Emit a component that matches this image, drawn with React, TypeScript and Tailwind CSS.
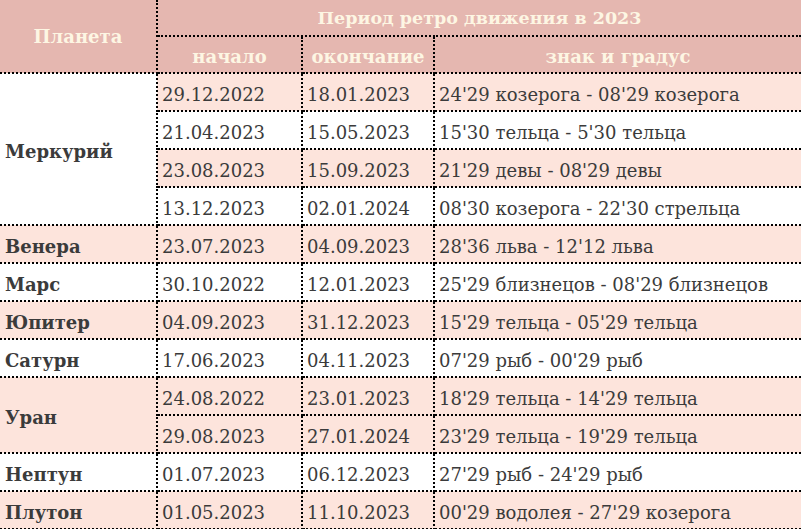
import React from "react";

interface Period {
  start: string;
  end: string;
  sign: string;
}

interface Planet {
  name: string;
  pink: boolean; // planet cell + rows background
  periods: Period[];
  stripe?: boolean; // alternate sub-rows (Меркурий)
}

const planets: Planet[] = [
  {
    name: "Меркурий",
    pink: false,
    stripe: true,
    periods: [
      { start: "29.12.2022", end: "18.01.2023", sign: "24'29 козерога - 08'29 козерога" },
      { start: "21.04.2023", end: "15.05.2023", sign: "15'30 тельца - 5'30 тельца" },
      { start: "23.08.2023", end: "15.09.2023", sign: "21'29 девы - 08'29 девы" },
      { start: "13.12.2023", end: "02.01.2024", sign: "08'30 козерога - 22'30 стрельца" },
    ],
  },
  { name: "Венера", pink: true, periods: [{ start: "23.07.2023", end: "04.09.2023", sign: "28'36 льва - 12'12 льва" }] },
  { name: "Марс", pink: false, periods: [{ start: "30.10.2022", end: "12.01.2023", sign: "25'29 близнецов - 08'29 близнецов" }] },
  { name: "Юпитер", pink: true, periods: [{ start: "04.09.2023", end: "31.12.2023", sign: "15'29 тельца - 05'29 тельца" }] },
  { name: "Сатурн", pink: false, periods: [{ start: "17.06.2023", end: "04.11.2023", sign: "07'29 рыб - 00'29 рыб" }] },
  {
    name: "Уран",
    pink: true,
    periods: [
      { start: "24.08.2022", end: "23.01.2023", sign: "18'29 тельца - 14'29 тельца" },
      { start: "29.08.2023", end: "27.01.2024", sign: "23'29 тельца - 19'29 тельца" },
    ],
  },
  { name: "Нептун", pink: false, periods: [{ start: "01.07.2023", end: "06.12.2023", sign: "27'29 рыб - 24'29 рыб" }] },
  { name: "Плутон", pink: true, periods: [{ start: "01.05.2023", end: "11.10.2023", sign: "00'29 водолея - 27'29 козерога" }] },
];

const cell = "border-b-2 border-dotted border-black px-[4px] pt-[6px] align-middle whitespace-nowrap";

export default function App() {
  return (
    <div className="w-[801px] h-[529px] overflow-hidden bg-white font-['DejaVu_Serif',serif] text-[#3b3b3b]">
      <table className="w-full table-fixed border-collapse text-[18px] leading-none">
        <colgroup>
          <col className="w-[157px]" />
          <col className="w-[145px]" />
          <col className="w-[132px]" />
          <col />
        </colgroup>
        <thead className="bg-[#e5b7b0] text-[#fdf6e3] font-bold">
          <tr className="h-[36px]">
            <th rowSpan={2} className="border-r-2 border-b-2 border-dotted border-black text-center text-[18px] pt-[2px]">
              Планета
            </th>
            <th colSpan={3} className="border-b-2 border-dotted border-black text-center text-[17.5px] pt-[3px]">
              Период ретро движения в 2023
            </th>
          </tr>
          <tr className="h-[37px]">
            <th className="border-r-2 border-b-2 border-dotted border-black text-center pt-[5px]">начало</th>
            <th className="border-r-2 border-b-2 border-dotted border-black text-center pt-[5px]">окончание</th>
            <th className="border-b-2 border-dotted border-black text-center pt-[5px]">знак и градус</th>
          </tr>
        </thead>
        <tbody>
          {planets.map((p) =>
            p.periods.map((per, i) => {
              const rowPink = p.stripe ? i % 2 === 0 : p.pink;
              const bg = rowPink ? "bg-[#fde4dc]" : "bg-white";
              return (
                <tr key={p.name + i} className="h-[38px]">
                  {i === 0 && (
                    <td
                      rowSpan={p.periods.length}
                      className={`${cell} border-r-2 font-bold pl-[5px] ${p.pink ? "bg-[#fde4dc]" : "bg-white"}`}
                    >
                      {p.name}
                    </td>
                  )}
                  <td className={`${cell} border-r-2 ${bg}`}>{per.start}</td>
                  <td className={`${cell} border-r-2 ${bg}`}>{per.end}</td>
                  <td className={`${cell} ${bg}`}>{per.sign}</td>
                </tr>
              );
            })
          )}
        </tbody>
      </table>
    </div>
  );
}
